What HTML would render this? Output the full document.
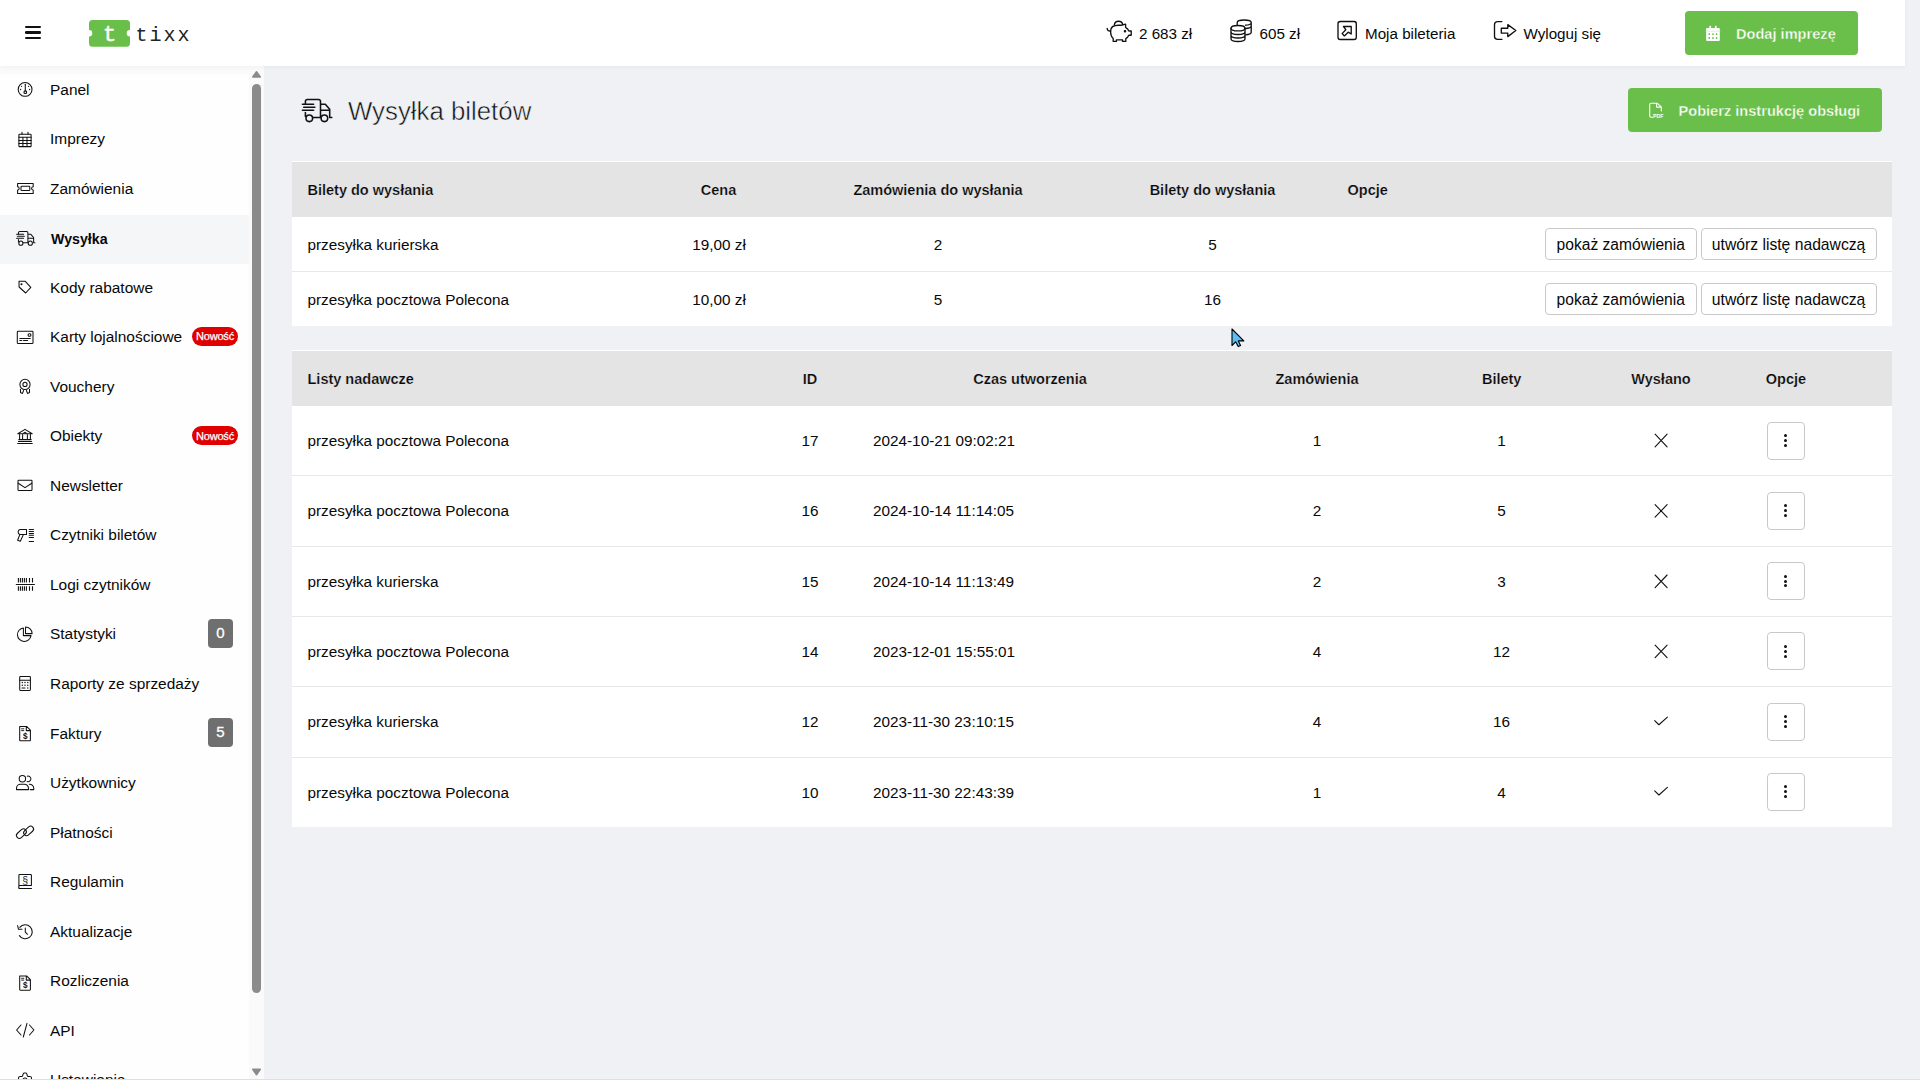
<!DOCTYPE html>
<html><head><meta charset="utf-8"><style>
html,body{margin:0;padding:0;}
body{width:1920px;height:1080px;overflow:hidden;position:relative;background:#f0f1f5;font-family:"Liberation Sans", sans-serif;color:#080808;}
.t{position:absolute;white-space:nowrap;line-height:20px;}
svg{position:absolute;overflow:visible;}
</style></head><body>
<div style="position:absolute;left:0px;top:0px;width:1905px;height:66px;background:#fff;z-index:3;box-shadow:0 1px 5px rgba(0,0,0,0.045);"></div>
<div style="position:absolute;left:25px;top:25.5px;width:16px;height:2.4px;background:#111;z-index:5;border-radius:1.2px;"></div>
<div style="position:absolute;left:25px;top:31.2px;width:16px;height:2.4px;background:#111;z-index:5;border-radius:1.2px;"></div>
<div style="position:absolute;left:25px;top:37.0px;width:16px;height:2.4px;background:#111;z-index:5;border-radius:1.2px;"></div>
<svg style="left:80px;top:15px;z-index:5" width="120" height="40" viewBox="80 15 120 40" fill="none" stroke="#111" stroke-width="1.1" stroke-linecap="round" stroke-linejoin="round"><path d="M92.5,20 H126.5 A3.5,3.5 0 0 1 130,23.5 V30 A3.3,3.3 0 0 0 130,36.6 V43.3 A3.5,3.5 0 0 1 126.5,46.8 H92.5 A3.5,3.5 0 0 1 89,43.3 V36.6 A3.3,3.3 0 0 0 89,30 V23.5 A3.5,3.5 0 0 1 92.5,20 Z" fill="#6abf4a" stroke="none"/></svg>
<div class="t" style="left:103px;top:25px;font-family:'Liberation Mono',monospace;font-size:22px;line-height:22px;color:#fff;z-index:5;-webkit-text-stroke:0.4px #fff;">t</div>
<div class="t" style="left:135.5px;top:24.5px;font-family:'Liberation Mono',monospace;font-size:20px;line-height:22px;letter-spacing:2px;color:#222;z-index:5;">tixx</div>
<div class="t" style="left:1139px;top:23.73px;font-size:15.2px;font-weight:400;color:#080808;z-index:4;">2 683 zł</div>
<div class="t" style="left:1259.5px;top:23.73px;font-size:15.2px;font-weight:400;color:#080808;z-index:4;">605 zł</div>
<div class="t" style="left:1365px;top:23.73px;font-size:15.2px;font-weight:400;color:#080808;z-index:4;">Moja bileteria</div>
<div class="t" style="left:1523.5px;top:23.73px;font-size:15.2px;font-weight:400;color:#080808;z-index:4;">Wyloguj się</div>
<svg style="left:1100px;top:15px;z-index:5" width="430" height="30" viewBox="1100 15 430 30" fill="none" stroke="#111" stroke-width="1.35" stroke-linecap="round" stroke-linejoin="round"><path d="M1114.3,24.9 A4.3,4.3 0 0 1 1122.8,24.9"/><path d="M1110.6,31 C1110.6,27 1114,25.2 1118.5,25.2 H1121.5 L1125.6,24.2 V27.3 C1127.3,28.2 1128.3,29.5 1128.9,31 H1131.2 V35.2 H1128.8 C1128.1,36.8 1127,37.9 1125.8,38.6 V41.4 H1122.6 V39.9 H1116.4 V41.4 H1113.2 V38.5 C1111.6,37.1 1110.6,34.5 1110.6,31 Z"/><path d="M1110.6,31.2 C1108.6,31.2 1107.2,30.2 1107.2,28.3"/><circle cx="1125" cy="31.3" r="0.6" fill="#1b1b1b"/><ellipse cx="1238" cy="28.2" rx="7" ry="2.7"/><path d="M1231,28.2 V38.8 A7,2.7 0 0 0 1245,38.8 V28.2 M1231,31.8 A7,2.7 0 0 0 1245,31.8 M1231,35.3 A7,2.7 0 0 0 1245,35.3"/><path d="M1237.2,22.6 A7,2.6 0 0 1 1251.2,22.6 A7,2.6 0 0 1 1245.5,25.2 M1251.2,22.6 V32.4 A7,2.6 0 0 1 1245.5,34.8 M1251.2,26.1 A7,2.6 0 0 1 1245.5,28.5 M1237.2,22.6 V25"/><rect x="1338" y="21.5" width="18.3" height="18" rx="2.2"/><path d="M1343.5,26.5 H1351.2 V34 L1348.2,32.2 L1344.4,35.9 L1342.1,33.6 L1345.8,29.7 Z"/><path d="M1501.8,21.6 H1497.6 A3.1,3.1 0 0 0 1494.5,24.7 V36.2 A3.1,3.1 0 0 0 1497.6,39.3 H1502"/><path d="M1501.3,28.2 H1507.8 V24.6 L1515.8,30.5 L1507.8,36.6 V33.1 H1501.3 Z"/></svg>
<svg style="left:1700px;top:20px;z-index:5" width="30" height="30" viewBox="1700 20 30 30" fill="none" stroke="#111" stroke-width="1.1" stroke-linecap="round" stroke-linejoin="round"><rect x="1706.1" y="28" width="13.7" height="12.9" rx="0.8" fill="#fff" stroke="none"/><rect x="1709.4" y="25.8" width="1.7" height="3" fill="#fff" stroke="none"/><rect x="1714.9" y="25.8" width="1.7" height="3" fill="#fff" stroke="none"/><path d="M1706.1,31.2 H1719.8" stroke="#dfeed6" stroke-width="1"/><g fill="#6abf4a" stroke="none"><circle cx="1709.3" cy="34.2" r="0.9"/><circle cx="1713" cy="34.2" r="0.9"/><circle cx="1716.6" cy="34.2" r="0.9"/><circle cx="1709.3" cy="38" r="0.9"/><circle cx="1713" cy="38" r="0.9"/><circle cx="1716.6" cy="38" r="0.9"/></g></svg>
<svg style="left:1640px;top:95px;z-index:5" width="30" height="30" viewBox="1640 95 30 30" fill="none" stroke="#111" stroke-width="1.1" stroke-linecap="round" stroke-linejoin="round"><path d="M1661.3,111 V106.8 L1657.3,103.3 H1651.2 A1.5,1.5 0 0 0 1649.7,104.8 V115.8 A1.5,1.5 0 0 0 1651.2,117.3 H1652.5 M1656.6,103.4 V107.1 H1661" stroke="#fff" stroke-width="1.1"/><text x="1653" y="117.8" font-family="Liberation Sans" font-weight="700" font-size="6.2" fill="#fff" stroke="none" textLength="10.5" lengthAdjust="spacingAndGlyphs">PDF</text></svg>
<svg style="left:295px;top:90px;z-index:5" width="45" height="40" viewBox="295 90 45 40" fill="none" stroke="#111" stroke-width="1.55" stroke-linecap="round" stroke-linejoin="round"><path d="M305.4,104 V101.6 A2.1,2.1 0 0 1 307.5,99.5 H318.5 A2,2 0 0 1 320.5,101.5 V117.5 M305.4,112.4 V116.5 M313,117.5 H320.5 M320.5,104.2 H325.3 L329.7,109.3 V117.5 H331.8 M320.5,110.3 H329.7"/><circle cx="309.3" cy="118.3" r="3.3"/><circle cx="324.4" cy="118.3" r="3.3"/><path d="M302.4,104.2 H313.6 M303.7,107.2 H314.9 M302.4,110.3 H313.6"/></svg>
<div style="position:absolute;left:1685px;top:11px;width:173px;height:44px;background:#6abf4a;z-index:4;border-radius:4px;"></div>
<div class="t" style="left:1736px;top:23.94px;font-size:14.6px;font-weight:700;color:#fff;z-index:5;-webkit-text-stroke:0.35px #6abf4a;">Dodaj imprezę</div>
<div style="position:absolute;left:0px;top:66px;width:249px;height:1014px;background:#fefefe;z-index:1;"></div>
<div style="position:absolute;left:0px;top:66px;width:249px;height:8px;background:#fafafb;z-index:1;"></div>
<div style="position:absolute;left:249px;top:66px;width:15px;height:1014px;background:#fafafa;z-index:1;"></div>
<div style="position:absolute;left:0px;top:215px;width:249px;height:49px;background:#f5f6f8;z-index:1;"></div>
<div style="position:absolute;left:252px;top:84px;width:9px;height:909px;background:#8b8b8b;z-index:2;border-radius:4.5px;"></div>
<svg style="left:248px;top:66px;z-index:2" width="16" height="1014" viewBox="248 66 16 1014" fill="none" stroke="#111" stroke-width="1.1" stroke-linecap="round" stroke-linejoin="round"><path d="M256.5,71.8 L260.3,77 H252.7 Z" fill="#8b8b8b" stroke="#8b8b8b" stroke-width="1.5"/><path d="M256.5,1074.7 L260.3,1069.3 H252.7 Z" fill="#8b8b8b" stroke="#8b8b8b" stroke-width="1.5"/></svg>
<div class="t" style="left:50px;top:79.50px;font-size:15.45px;font-weight:400;color:#080808;z-index:4;">Panel</div>
<div class="t" style="left:50px;top:129.04px;font-size:15.45px;font-weight:400;color:#080808;z-index:4;">Imprezy</div>
<div class="t" style="left:50px;top:178.58px;font-size:15.45px;font-weight:400;color:#080808;z-index:4;">Zamówienia</div>
<div class="t" style="left:51px;top:228.55px;font-size:14.2px;font-weight:700;color:#080808;z-index:4;">Wysyłka</div>
<div class="t" style="left:50px;top:277.66px;font-size:15.45px;font-weight:400;color:#080808;z-index:4;">Kody rabatowe</div>
<div class="t" style="left:50px;top:327.20px;font-size:15.45px;font-weight:400;color:#080808;z-index:4;">Karty lojalnościowe</div>
<div class="t" style="left:50px;top:376.74px;font-size:15.45px;font-weight:400;color:#080808;z-index:4;">Vouchery</div>
<div class="t" style="left:50px;top:426.28px;font-size:15.45px;font-weight:400;color:#080808;z-index:4;">Obiekty</div>
<div class="t" style="left:50px;top:475.82px;font-size:15.45px;font-weight:400;color:#080808;z-index:4;">Newsletter</div>
<div class="t" style="left:50px;top:525.36px;font-size:15.45px;font-weight:400;color:#080808;z-index:4;">Czytniki biletów</div>
<div class="t" style="left:50px;top:574.90px;font-size:15.45px;font-weight:400;color:#080808;z-index:4;">Logi czytników</div>
<div class="t" style="left:50px;top:624.44px;font-size:15.45px;font-weight:400;color:#080808;z-index:4;">Statystyki</div>
<div class="t" style="left:50px;top:673.98px;font-size:15.45px;font-weight:400;color:#080808;z-index:4;">Raporty ze sprzedaży</div>
<div class="t" style="left:50px;top:723.52px;font-size:15.45px;font-weight:400;color:#080808;z-index:4;">Faktury</div>
<div class="t" style="left:50px;top:773.06px;font-size:15.45px;font-weight:400;color:#080808;z-index:4;">Użytkownicy</div>
<div class="t" style="left:50px;top:822.60px;font-size:15.45px;font-weight:400;color:#080808;z-index:4;">Płatności</div>
<div class="t" style="left:50px;top:872.14px;font-size:15.45px;font-weight:400;color:#080808;z-index:4;">Regulamin</div>
<div class="t" style="left:50px;top:921.68px;font-size:15.45px;font-weight:400;color:#080808;z-index:4;">Aktualizacje</div>
<div class="t" style="left:50px;top:971.22px;font-size:15.45px;font-weight:400;color:#080808;z-index:4;">Rozliczenia</div>
<div class="t" style="left:50px;top:1020.76px;font-size:15.45px;font-weight:400;color:#080808;z-index:4;">API</div>
<div class="t" style="left:50px;top:1070.30px;font-size:15.45px;font-weight:400;color:#080808;z-index:4;">Ustawienia</div>
<div style="position:absolute;left:192px;top:326.74999999999994px;width:46px;height:19px;background:#e00000;z-index:4;border-radius:9.5px;"></div>
<div class="t" style="left:-85px;width:600px;text-align:center;top:326.44px;font-size:11px;font-weight:400;color:#fff;z-index:5;letter-spacing:-0.2px;-webkit-text-stroke:0.25px #fff;">Nowość</div>
<div style="position:absolute;left:192px;top:425.83px;width:46px;height:19px;background:#e00000;z-index:4;border-radius:9.5px;"></div>
<div class="t" style="left:-85px;width:600px;text-align:center;top:425.52px;font-size:11px;font-weight:400;color:#fff;z-index:5;letter-spacing:-0.2px;-webkit-text-stroke:0.25px #fff;">Nowość</div>
<div style="position:absolute;left:208px;top:619.29px;width:25px;height:29px;background:#6f6f6f;z-index:4;border-radius:4px;"></div>
<div class="t" style="left:-79.5px;width:600px;text-align:center;top:622.59px;font-size:15px;font-weight:400;color:#fff;z-index:5;-webkit-text-stroke:0.3px #fff;">0</div>
<div style="position:absolute;left:208px;top:718.37px;width:25px;height:29px;background:#6f6f6f;z-index:4;border-radius:4px;"></div>
<div class="t" style="left:-79.5px;width:600px;text-align:center;top:721.67px;font-size:15px;font-weight:400;color:#fff;z-index:5;-webkit-text-stroke:0.3px #fff;">5</div>
<svg style="left:10px;top:60px;z-index:4" width="40" height="1020" viewBox="10 60 40 1020" fill="none" stroke="#111" stroke-width="1.05" stroke-linecap="round" stroke-linejoin="round"><circle cx="25.1" cy="89.4" r="6.9"/><path d="M25.3,84.2 V90.8"/><circle cx="25.3" cy="92.2" r="1.35"/><g fill="#111" stroke="none"><circle cx="21.6" cy="86.3" r="0.65"/><circle cx="28.6" cy="86.3" r="0.65"/><circle cx="20.6" cy="89.5" r="0.65"/><circle cx="29.6" cy="89.5" r="0.65"/></g><rect x="18.9" y="134.3" width="12.2" height="12.3" rx="0.7"/><path d="M22,132.2 V134.3 M28,132.2 V134.3 M18.9,137.3 H31.1 M18.9,140.4 H31.1 M18.9,143.5 H31.1 M22.9,137.3 V146.6 M27,137.3 V146.6"/><path d="M17.6,183.5 H33.2 V186.8 A1.6,1.6 0 0 0 33.2,190 V193.5 H17.6 V190 A1.6,1.6 0 0 0 17.6,186.8 Z"/><rect x="21" y="186.2" width="8.8" height="4.4" rx="0.8"/><g transform="translate(16.2,230.9) scale(0.625) translate(-301.8,-98.7)" stroke-width="1.65"><path d="M305.4,104 V101.6 A2.1,2.1 0 0 1 307.5,99.5 H318.5 A2,2 0 0 1 320.5,101.5 V117.5 M305.4,112.4 V116.5 M313,117.5 H320.5 M320.5,104.2 H325.3 L329.7,109.3 V117.5 H331.8 M320.5,110.3 H329.7"/><circle cx="309.3" cy="118.3" r="3.3"/><circle cx="324.4" cy="118.3" r="3.3"/><path d="M302.4,104.2 H313.6 M303.7,107.2 H314.9 M302.4,110.3 H313.6"/></g><path d="M19,281.3 H25.3 L30.8,287.3 L25.7,293 L19.1,287 Z"/><circle cx="21.5" cy="284.3" r="0.5" fill="#1b1b1b"/><rect x="17.3" y="331.3" width="15.7" height="12.2" rx="0.8"/><rect x="28.1" y="333.7" width="2.8" height="2.6" rx="1"/><path d="M19.8,338.5 H30.3 M19.8,340.5 H21.8 M23.5,340.5 H27.6" stroke-width="1"/><circle cx="25" cy="384.4" r="5.1"/><circle cx="25" cy="384.4" r="2.1"/><path d="M20.5,389.3 V392.5 L22.5,393.4 L23.6,390.5 M29.5,389.3 V392.5 L27.5,393.4 L26.4,390.5"/><path d="M17.8,433.7 L25,429.4 L32.2,433.7 Z"/><path d="M19.6,434.5 V439.5 M22.6,434.5 V439.5 M27.4,434.5 V439.5 M30.4,434.5 V439.5 M18.8,439.6 H31.2 M18.4,441.4 H31.6 M17.7,443.5 H32.3"/><path d="M23.8,433.5 A1.2,1.2 0 0 1 26.2,433.5" /><rect x="18" y="480.3" width="14" height="10.2" rx="0.8"/><path d="M18.2,483.3 L25,487.6 L31.8,483.3"/><path d="M26.5,529.4 V534.4 H20 A2.6,2.6 0 0 1 20,529.4 Z M19.8,534.6 L17.6,540.2 L20.3,541.3 L23.4,534.6"/><path d="M29.2,529.4 H33.5 M29.2,531.4 H33.5 M29.2,533.5 H33.5 M29.2,535.3 H33.5 M29.2,537.4 H33.5 M29.2,541.4 H33.5"/><path d="M16.3,584.4 H34.4"/><path d="M18.4,578 V582.5 M20.4,578 V582.5 M22.4,578 V582.5 M24.4,578 V582.5 M26.4,578 V582.5 M29.5,578 V582.5 M32.5,578 V582.5 M18.4,586.3 V590.7 M20.4,586.3 V590.7 M22.4,586.3 V590.7 M24.4,586.3 V590.7 M26.4,586.3 V590.7 M29.5,586.3 V590.7 M32.5,586.3 V590.7" stroke-width="1.1" stroke-linecap="butt"/><path d="M23.4,627.9 A6.8,6.8 0 1 0 31,635.6 H23.4 Z"/><path d="M25.5,627 V633.6 H32.1 A6.6,6.6 0 0 0 25.5,627 Z"/><rect x="19.7" y="676.4" width="10.7" height="14" rx="0.8"/><path d="M19.7,680.2 H30.4"/><path d="M22.3,682.5 h0.01 M25,682.5 h0.01 M27.8,682.5 h0.01 M22.3,685.3 h0.01 M25,685.3 h0.01 M27.8,685.3 h0.01 M27.8,688 h0.01" stroke-width="1.4"/><path d="M22,688 H25"/><path d="M19.7,726.4 H26.6 L30.4,730.2 V740.1 A0.6,0.6 0 0 1 29.8,740.7 H20.3 A0.6,0.6 0 0 1 19.7,740.1 Z M26.3,726.4 V730.6 H30.4"/><path d="M21.6,728.8 H23.8 M21.6,730.6 H23.8" stroke-width="0.9"/><text x="25.3" y="738.6" font-family="Liberation Sans" font-weight="700" font-size="8.2" text-anchor="middle" fill="#111" stroke="none">$</text><circle cx="22.4" cy="778.7" r="3.2"/><path d="M16.5,789.6 V788.2 A4,4 0 0 1 20.5,784.2 H24.3 A4.2,4.2 0 0 1 28.5,788.4 V789.6 Z"/><path d="M27.2,776.2 A2.8,2.8 0 1 1 27.2,781.5"/><path d="M29.2,784.3 A4.2,4.3 0 0 1 33.8,788.8 V789.6 H30.2"/><rect x="-5.6" y="-2.9" width="11.2" height="5.8" rx="2.9" transform="translate(21.4,833.6) rotate(-42)"/><rect x="-5.6" y="-2.9" width="11.2" height="5.8" rx="2.9" transform="translate(28.6,830.9) rotate(-42)"/><path d="M18.9,888.4 V875.2 A0.8,0.8 0 0 1 19.7,874.4 H30.6 A0.8,0.8 0 0 1 31.4,875.2 V885.4 H19.6 A0.9,1.5 0 0 0 19.6,888.4 H31.5"/><text x="25.2" y="884" font-family="Liberation Sans" font-size="10.5" text-anchor="middle" fill="#1b1b1b" stroke="none">§</text><path d="M19.8,927.4 A7,7 0 1 1 19.4,935.6"/><path d="M17.6,925.5 L18.5,929.3 L22,929.3"/><path d="M25.3,928.1 V932.2 L27.5,934.3"/><path d="M19.7,975.9 H26.6 L30.4,979.7 V989.6 A0.6,0.6 0 0 1 29.8,990.2 H20.3 A0.6,0.6 0 0 1 19.7,989.6 Z M26.3,975.9 V980.1 H30.4"/><path d="M21.6,978.3 H23.8 M21.6,980.1 H23.8" stroke-width="0.9"/><text x="25.3" y="988.1" font-family="Liberation Sans" font-weight="700" font-size="8.2" text-anchor="middle" fill="#111" stroke="none">$</text><path d="M21,1025 L16.6,1030 L21,1035 M29.5,1025 L33.9,1030 L29.5,1035 M27,1023.4 L23.3,1037"/><path d="M18.5,1080 V1078 A1.5,1.5 0 0 1 20,1076.6 L21.5,1076.4 A1,1 0 0 0 22.7,1075.5 L23.3,1073.6 A1,1 0 0 1 24.3,1073 H25.7 A1,1 0 0 1 26.7,1073.6 L27.3,1075.5 A1,1 0 0 0 28.5,1076.4 L30,1076.6 A1.5,1.5 0 0 1 31.5,1078 V1080"/><path d="M23,1080 A2,2 0 0 1 27,1080"/></svg>
<div class="t" style="left:348px;top:101.06px;font-size:25.8px;font-weight:400;color:#111;z-index:4;-webkit-text-stroke:0.5px #f0f1f5;paint-order:normal;">Wysyłka biletów</div>
<div style="position:absolute;left:1628px;top:88px;width:254px;height:44px;background:#6abf4a;z-index:4;border-radius:4px;"></div>
<div class="t" style="left:1678.5px;top:100.74px;font-size:14.6px;font-weight:700;color:#fff;z-index:5;-webkit-text-stroke:0.35px #6abf4a;">Pobierz instrukcję obsługi</div>
<div style="position:absolute;left:292px;top:161px;width:1600px;height:165px;background:#fff;z-index:1;"></div>
<div style="position:absolute;left:292px;top:162px;width:1600px;height:54.5px;background:#e4e4e4;z-index:2;"></div>
<div style="position:absolute;left:292px;top:270.5px;width:1600px;height:1px;background:#e8e8e8;z-index:2;"></div>
<div class="t" style="left:307.5px;top:179.98px;font-size:14.5px;font-weight:700;color:#080808;z-index:4;-webkit-text-stroke:0.2px #e4e4e4;">Bilety do wysłania</div>
<div class="t" style="left:418.5px;width:600px;text-align:center;top:179.98px;font-size:14.5px;font-weight:700;color:#080808;z-index:4;-webkit-text-stroke:0.2px #e4e4e4;">Cena</div>
<div class="t" style="left:638px;width:600px;text-align:center;top:179.98px;font-size:14.5px;font-weight:700;color:#080808;z-index:4;-webkit-text-stroke:0.2px #e4e4e4;">Zamówienia do wysłania</div>
<div class="t" style="left:912.5px;width:600px;text-align:center;top:179.98px;font-size:14.5px;font-weight:700;color:#080808;z-index:4;-webkit-text-stroke:0.2px #e4e4e4;">Bilety do wysłania</div>
<div class="t" style="left:1347.5px;top:179.98px;font-size:14.5px;font-weight:700;color:#080808;z-index:4;-webkit-text-stroke:0.2px #e4e4e4;">Opcje</div>
<div class="t" style="left:307.5px;top:234.70px;font-size:15.3px;font-weight:400;color:#080808;z-index:4;">przesyłka kurierska</div>
<div class="t" style="left:419px;width:600px;text-align:center;top:234.70px;font-size:15.3px;font-weight:400;color:#080808;z-index:4;">19,00 zł</div>
<div class="t" style="left:638px;width:600px;text-align:center;top:234.70px;font-size:15.3px;font-weight:400;color:#080808;z-index:4;">2</div>
<div class="t" style="left:912.5px;width:600px;text-align:center;top:234.70px;font-size:15.3px;font-weight:400;color:#080808;z-index:4;">5</div>
<div style="position:absolute;left:1545px;top:228px;width:151.5px;height:31.5px;background:#fff;z-index:3;border:1px solid #c9c9c9;border-radius:4px;box-sizing:border-box;"></div>
<div style="position:absolute;left:1700.5px;top:228px;width:176px;height:31.5px;background:#fff;z-index:3;border:1px solid #c9c9c9;border-radius:4px;box-sizing:border-box;"></div>
<div class="t" style="left:1320.75px;width:600px;text-align:center;top:234.59px;font-size:15.6px;font-weight:400;color:#080808;z-index:5;">pokaż zamówienia</div>
<div class="t" style="left:1488.6px;width:600px;text-align:center;top:234.56px;font-size:15.7px;font-weight:400;color:#080808;z-index:5;">utwórz listę nadawczą</div>
<div class="t" style="left:307.5px;top:289.70px;font-size:15.3px;font-weight:400;color:#080808;z-index:4;">przesyłka pocztowa Polecona</div>
<div class="t" style="left:419px;width:600px;text-align:center;top:289.70px;font-size:15.3px;font-weight:400;color:#080808;z-index:4;">10,00 zł</div>
<div class="t" style="left:638px;width:600px;text-align:center;top:289.70px;font-size:15.3px;font-weight:400;color:#080808;z-index:4;">5</div>
<div class="t" style="left:912.5px;width:600px;text-align:center;top:289.70px;font-size:15.3px;font-weight:400;color:#080808;z-index:4;">16</div>
<div style="position:absolute;left:1545px;top:283px;width:151.5px;height:31.5px;background:#fff;z-index:3;border:1px solid #c9c9c9;border-radius:4px;box-sizing:border-box;"></div>
<div style="position:absolute;left:1700.5px;top:283px;width:176px;height:31.5px;background:#fff;z-index:3;border:1px solid #c9c9c9;border-radius:4px;box-sizing:border-box;"></div>
<div class="t" style="left:1320.75px;width:600px;text-align:center;top:289.59px;font-size:15.6px;font-weight:400;color:#080808;z-index:5;">pokaż zamówienia</div>
<div class="t" style="left:1488.6px;width:600px;text-align:center;top:289.56px;font-size:15.7px;font-weight:400;color:#080808;z-index:5;">utwórz listę nadawczą</div>
<div style="position:absolute;left:292px;top:350px;width:1600px;height:477px;background:#fff;z-index:1;"></div>
<div style="position:absolute;left:292px;top:351px;width:1600px;height:54.5px;background:#e4e4e4;z-index:2;"></div>
<div class="t" style="left:307.5px;top:369.18px;font-size:14.5px;font-weight:700;color:#080808;z-index:4;-webkit-text-stroke:0.2px #e4e4e4;">Listy nadawcze</div>
<div class="t" style="left:510px;width:600px;text-align:center;top:369.18px;font-size:14.5px;font-weight:700;color:#080808;z-index:4;-webkit-text-stroke:0.2px #e4e4e4;">ID</div>
<div class="t" style="left:730px;width:600px;text-align:center;top:369.18px;font-size:14.5px;font-weight:700;color:#080808;z-index:4;-webkit-text-stroke:0.2px #e4e4e4;">Czas utworzenia</div>
<div class="t" style="left:1017px;width:600px;text-align:center;top:369.18px;font-size:14.5px;font-weight:700;color:#080808;z-index:4;-webkit-text-stroke:0.2px #e4e4e4;">Zamówienia</div>
<div class="t" style="left:1201.7px;width:600px;text-align:center;top:369.18px;font-size:14.5px;font-weight:700;color:#080808;z-index:4;-webkit-text-stroke:0.2px #e4e4e4;">Bilety</div>
<div class="t" style="left:1361px;width:600px;text-align:center;top:369.18px;font-size:14.5px;font-weight:700;color:#080808;z-index:4;-webkit-text-stroke:0.2px #e4e4e4;">Wysłano</div>
<div class="t" style="left:1486px;width:600px;text-align:center;top:369.18px;font-size:14.5px;font-weight:700;color:#080808;z-index:4;-webkit-text-stroke:0.2px #e4e4e4;">Opcje</div>
<div style="position:absolute;left:292px;top:475.0px;width:1600px;height:1px;background:#e8e8e8;z-index:2;"></div>
<div class="t" style="left:307.5px;top:431.00px;font-size:15.3px;font-weight:400;color:#080808;z-index:4;">przesyłka pocztowa Polecona</div>
<div class="t" style="left:510px;width:600px;text-align:center;top:431.00px;font-size:15.3px;font-weight:400;color:#080808;z-index:4;">17</div>
<div class="t" style="left:873px;top:431.00px;font-size:15.3px;font-weight:400;color:#080808;z-index:4;">2024-10-21 09:02:21</div>
<div class="t" style="left:1017px;width:600px;text-align:center;top:431.00px;font-size:15.3px;font-weight:400;color:#080808;z-index:4;">1</div>
<div class="t" style="left:1201.5px;width:600px;text-align:center;top:431.00px;font-size:15.3px;font-weight:400;color:#080808;z-index:4;">1</div>
<div style="position:absolute;left:1767px;top:421.5px;width:38px;height:38px;background:#fff;z-index:3;border:1px solid #c9c9c9;border-radius:4px;box-sizing:border-box;"></div>
<div style="position:absolute;left:1784px;top:433.8px;width:3px;height:3px;background:#111;z-index:4;border-radius:50%;"></div>
<div style="position:absolute;left:1784px;top:438.7px;width:3px;height:3px;background:#111;z-index:4;border-radius:50%;"></div>
<div style="position:absolute;left:1784px;top:443.59999999999997px;width:3px;height:3px;background:#111;z-index:4;border-radius:50%;"></div>
<div style="position:absolute;left:292px;top:545.8px;width:1600px;height:1px;background:#e8e8e8;z-index:2;"></div>
<div class="t" style="left:307.5px;top:501.40px;font-size:15.3px;font-weight:400;color:#080808;z-index:4;">przesyłka pocztowa Polecona</div>
<div class="t" style="left:510px;width:600px;text-align:center;top:501.40px;font-size:15.3px;font-weight:400;color:#080808;z-index:4;">16</div>
<div class="t" style="left:873px;top:501.40px;font-size:15.3px;font-weight:400;color:#080808;z-index:4;">2024-10-14 11:14:05</div>
<div class="t" style="left:1017px;width:600px;text-align:center;top:501.40px;font-size:15.3px;font-weight:400;color:#080808;z-index:4;">2</div>
<div class="t" style="left:1201.5px;width:600px;text-align:center;top:501.40px;font-size:15.3px;font-weight:400;color:#080808;z-index:4;">5</div>
<div style="position:absolute;left:1767px;top:491.9px;width:38px;height:38px;background:#fff;z-index:3;border:1px solid #c9c9c9;border-radius:4px;box-sizing:border-box;"></div>
<div style="position:absolute;left:1784px;top:504.2px;width:3px;height:3px;background:#111;z-index:4;border-radius:50%;"></div>
<div style="position:absolute;left:1784px;top:509.09999999999997px;width:3px;height:3px;background:#111;z-index:4;border-radius:50%;"></div>
<div style="position:absolute;left:1784px;top:514.0px;width:3px;height:3px;background:#111;z-index:4;border-radius:50%;"></div>
<div style="position:absolute;left:292px;top:615.8px;width:1600px;height:1px;background:#e8e8e8;z-index:2;"></div>
<div class="t" style="left:307.5px;top:571.80px;font-size:15.3px;font-weight:400;color:#080808;z-index:4;">przesyłka kurierska</div>
<div class="t" style="left:510px;width:600px;text-align:center;top:571.80px;font-size:15.3px;font-weight:400;color:#080808;z-index:4;">15</div>
<div class="t" style="left:873px;top:571.80px;font-size:15.3px;font-weight:400;color:#080808;z-index:4;">2024-10-14 11:13:49</div>
<div class="t" style="left:1017px;width:600px;text-align:center;top:571.80px;font-size:15.3px;font-weight:400;color:#080808;z-index:4;">2</div>
<div class="t" style="left:1201.5px;width:600px;text-align:center;top:571.80px;font-size:15.3px;font-weight:400;color:#080808;z-index:4;">3</div>
<div style="position:absolute;left:1767px;top:562.3px;width:38px;height:38px;background:#fff;z-index:3;border:1px solid #c9c9c9;border-radius:4px;box-sizing:border-box;"></div>
<div style="position:absolute;left:1784px;top:574.6px;width:3px;height:3px;background:#111;z-index:4;border-radius:50%;"></div>
<div style="position:absolute;left:1784px;top:579.5px;width:3px;height:3px;background:#111;z-index:4;border-radius:50%;"></div>
<div style="position:absolute;left:1784px;top:584.4px;width:3px;height:3px;background:#111;z-index:4;border-radius:50%;"></div>
<div style="position:absolute;left:292px;top:686.0px;width:1600px;height:1px;background:#e8e8e8;z-index:2;"></div>
<div class="t" style="left:307.5px;top:641.90px;font-size:15.3px;font-weight:400;color:#080808;z-index:4;">przesyłka pocztowa Polecona</div>
<div class="t" style="left:510px;width:600px;text-align:center;top:641.90px;font-size:15.3px;font-weight:400;color:#080808;z-index:4;">14</div>
<div class="t" style="left:873px;top:641.90px;font-size:15.3px;font-weight:400;color:#080808;z-index:4;">2023-12-01 15:55:01</div>
<div class="t" style="left:1017px;width:600px;text-align:center;top:641.90px;font-size:15.3px;font-weight:400;color:#080808;z-index:4;">4</div>
<div class="t" style="left:1201.5px;width:600px;text-align:center;top:641.90px;font-size:15.3px;font-weight:400;color:#080808;z-index:4;">12</div>
<div style="position:absolute;left:1767px;top:632.4px;width:38px;height:38px;background:#fff;z-index:3;border:1px solid #c9c9c9;border-radius:4px;box-sizing:border-box;"></div>
<div style="position:absolute;left:1784px;top:644.7px;width:3px;height:3px;background:#111;z-index:4;border-radius:50%;"></div>
<div style="position:absolute;left:1784px;top:649.6px;width:3px;height:3px;background:#111;z-index:4;border-radius:50%;"></div>
<div style="position:absolute;left:1784px;top:654.5px;width:3px;height:3px;background:#111;z-index:4;border-radius:50%;"></div>
<div style="position:absolute;left:292px;top:756.7px;width:1600px;height:1px;background:#e8e8e8;z-index:2;"></div>
<div class="t" style="left:307.5px;top:712.35px;font-size:15.3px;font-weight:400;color:#080808;z-index:4;">przesyłka kurierska</div>
<div class="t" style="left:510px;width:600px;text-align:center;top:712.35px;font-size:15.3px;font-weight:400;color:#080808;z-index:4;">12</div>
<div class="t" style="left:873px;top:712.35px;font-size:15.3px;font-weight:400;color:#080808;z-index:4;">2023-11-30 23:10:15</div>
<div class="t" style="left:1017px;width:600px;text-align:center;top:712.35px;font-size:15.3px;font-weight:400;color:#080808;z-index:4;">4</div>
<div class="t" style="left:1201.5px;width:600px;text-align:center;top:712.35px;font-size:15.3px;font-weight:400;color:#080808;z-index:4;">16</div>
<div style="position:absolute;left:1767px;top:702.85px;width:38px;height:38px;background:#fff;z-index:3;border:1px solid #c9c9c9;border-radius:4px;box-sizing:border-box;"></div>
<div style="position:absolute;left:1784px;top:715.1500000000001px;width:3px;height:3px;background:#111;z-index:4;border-radius:50%;"></div>
<div style="position:absolute;left:1784px;top:720.0500000000001px;width:3px;height:3px;background:#111;z-index:4;border-radius:50%;"></div>
<div style="position:absolute;left:1784px;top:724.95px;width:3px;height:3px;background:#111;z-index:4;border-radius:50%;"></div>
<div class="t" style="left:307.5px;top:782.60px;font-size:15.3px;font-weight:400;color:#080808;z-index:4;">przesyłka pocztowa Polecona</div>
<div class="t" style="left:510px;width:600px;text-align:center;top:782.60px;font-size:15.3px;font-weight:400;color:#080808;z-index:4;">10</div>
<div class="t" style="left:873px;top:782.60px;font-size:15.3px;font-weight:400;color:#080808;z-index:4;">2023-11-30 22:43:39</div>
<div class="t" style="left:1017px;width:600px;text-align:center;top:782.60px;font-size:15.3px;font-weight:400;color:#080808;z-index:4;">1</div>
<div class="t" style="left:1201.5px;width:600px;text-align:center;top:782.60px;font-size:15.3px;font-weight:400;color:#080808;z-index:4;">4</div>
<div style="position:absolute;left:1767px;top:773.1px;width:38px;height:38px;background:#fff;z-index:3;border:1px solid #c9c9c9;border-radius:4px;box-sizing:border-box;"></div>
<div style="position:absolute;left:1784px;top:785.4000000000001px;width:3px;height:3px;background:#111;z-index:4;border-radius:50%;"></div>
<div style="position:absolute;left:1784px;top:790.3000000000001px;width:3px;height:3px;background:#111;z-index:4;border-radius:50%;"></div>
<div style="position:absolute;left:1784px;top:795.2px;width:3px;height:3px;background:#111;z-index:4;border-radius:50%;"></div>
<svg style="left:1640px;top:400px;z-index:5" width="40" height="440" viewBox="1640 400 40 440" fill="none" stroke="#111" stroke-width="1.1" stroke-linecap="round" stroke-linejoin="round"><path d="M1655.1,434.2 L1667.1,446.8 M1667.1,434.2 L1655.1,446.8"/><path d="M1655.1,504.59999999999997 L1667.1,517.1999999999999 M1667.1,504.59999999999997 L1655.1,517.1999999999999"/><path d="M1655.1,575.0 L1667.1,587.5999999999999 M1667.1,575.0 L1655.1,587.5999999999999"/><path d="M1655.1,645.1 L1667.1,657.6999999999999 M1667.1,645.1 L1655.1,657.6999999999999"/><path d="M1654.7,720.5500000000001 L1658.9,724.75 L1667.4,717.0500000000001"/><path d="M1654.7,790.8000000000001 L1658.9,795.0 L1667.4,787.3000000000001"/></svg>
<svg style="left:1225px;top:325px;z-index:8" width="25" height="25" viewBox="1225 325 25 25" fill="none" stroke="#111" stroke-width="1.1" stroke-linecap="round" stroke-linejoin="round"><path d="M1232,329 L1232,345.5 L1235.6,341.8 L1238.2,346.6 L1240.6,345.4 L1238.3,340.9 L1243.8,340.9 Z" fill="#5cbcf6" stroke="#000" stroke-width="1.1"/></svg>
<div style="position:absolute;left:0px;top:1079px;width:1920px;height:1px;background:#c8e7ee;z-index:6;"></div>
</body></html>
